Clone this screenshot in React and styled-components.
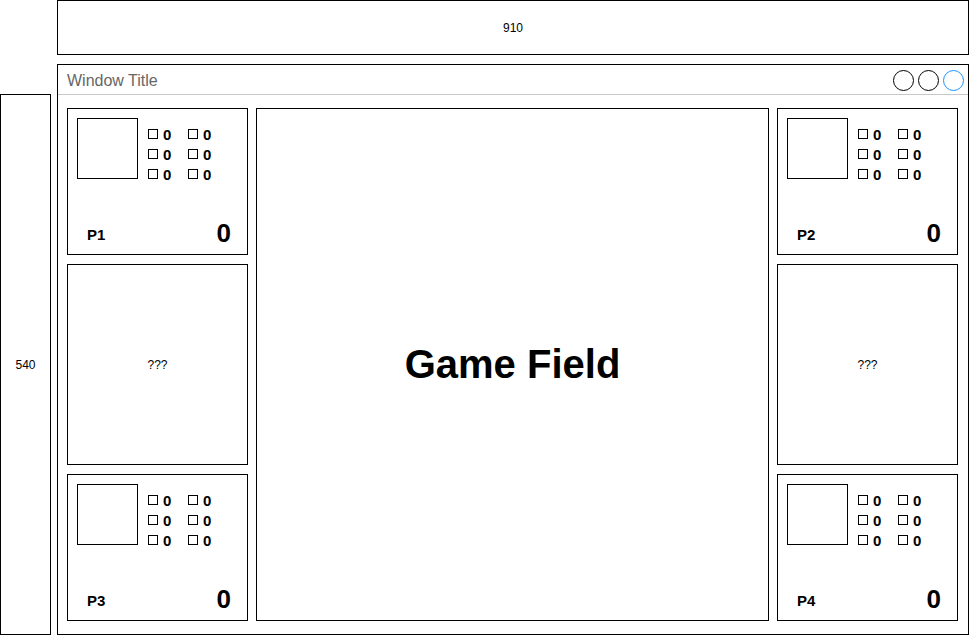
import React from "react";
import styled, { createGlobalStyle } from "styled-components";

const GlobalStyle = createGlobalStyle`
  * { box-sizing: border-box; }
  body {
    margin: 0;
    background: #fff;
    font-family: "Liberation Sans", Arial, sans-serif;
    color: #000;
  }
`;

const Page = styled.div`
  width: 969px;
  height: 635px;
  display: flex;
  flex-direction: column;
`;

const TopRow = styled.div`
  padding-left: 57px;
`;

const Ruler = styled.div`
  border: 1px solid #000;
  display: flex;
  align-items: center;
  justify-content: center;
  font-size: 12px;
`;

const WidthRuler = styled(Ruler)`
  width: 912px;
  height: 55px;
`;

const HeightRuler = styled(Ruler)`
  width: 51px;
  height: 541px;
`;

const MainRow = styled.div`
  margin-top: 9px;
  display: flex;
  align-items: flex-end;
  gap: 6px;
`;

const Window = styled.div`
  width: 912px;
  height: 571px;
  border: 1px solid #000;
  display: flex;
  flex-direction: column;
`;

const TitleBar = styled.div`
  height: 30px;
  border-bottom: 1px solid #c8c8c8;
  display: flex;
  align-items: center;
  justify-content: space-between;
  padding: 1px 4px 0 9px;
`;

const Title = styled.span`
  font-size: 16px;
  color: #666;
  padding-top: 2px;
`;

const Controls = styled.div`
  display: flex;
  gap: 4px;
`;

const Control = styled.span`
  width: 21px;
  height: 21px;
  border-radius: 50%;
  border: 1px solid ${(p) => (p.$active ? "#1e90ff" : "#000")};
`;

const Body = styled.div`
  flex: 1;
  display: grid;
  grid-template-columns: 181px 513px 181px;
  column-gap: 8px;
  padding: 13px 9px 13px 9px;
`;

const Column = styled.div`
  display: flex;
  flex-direction: column;
  gap: 9px;
`;

const Card = styled.div`
  border: 1px solid #000;
  height: 147px;
  padding: 9px 9px 6px;
  display: flex;
  flex-direction: column;
  justify-content: space-between;
`;

const Mystery = styled.div`
  border: 1px solid #000;
  height: 201px;
  display: flex;
  align-items: center;
  justify-content: center;
  font-size: 12px;
`;

const CardTop = styled.div`
  display: flex;
  gap: 10px;
`;

const Avatar = styled.div`
  width: 61px;
  height: 61px;
  border: 1px solid #000;
`;

const Stats = styled.div`
  margin-top: 6px;
  display: grid;
  grid-template-columns: 40px 40px;
  grid-auto-rows: 20px;
`;

const Stat = styled.div`
  display: flex;
  align-items: center;
  gap: 5px;
  font-size: 15px;
  font-weight: bold;
`;

const Box = styled.span`
  width: 10px;
  height: 10px;
  border: 1px solid #000;
`;

const Footer = styled.div`
  height: 30px;
  display: flex;
  align-items: center;
  justify-content: space-between;
  padding: 0 7px 0 10px;
`;

const Label = styled.span`
  font-size: 15px;
  font-weight: bold;
  padding-top: 2px;
`;

const Score = styled.span`
  font-size: 26px;
  font-weight: bold;
`;

const Field = styled.div`
  border: 1px solid #000;
  display: flex;
  align-items: center;
  justify-content: center;
  font-size: 40px;
  font-weight: bold;
`;

const PlayerCard = ({ name }) => (
  <Card>
    <CardTop>
      <Avatar />
      <Stats>
        {Array.from({ length: 6 }).map((_, i) => (
          <Stat key={i}>
            <Box />0
          </Stat>
        ))}
      </Stats>
    </CardTop>
    <Footer>
      <Label>{name}</Label>
      <Score>0</Score>
    </Footer>
  </Card>
);

const App = () => (
  <Page>
    <GlobalStyle />
    <TopRow>
      <WidthRuler>910</WidthRuler>
    </TopRow>
    <MainRow>
      <HeightRuler>540</HeightRuler>
      <Window>
        <TitleBar>
          <Title>Window Title</Title>
          <Controls>
            <Control />
            <Control />
            <Control $active />
          </Controls>
        </TitleBar>
        <Body>
          <Column>
            <PlayerCard name="P1" />
            <Mystery>???</Mystery>
            <PlayerCard name="P3" />
          </Column>
          <Field>Game Field</Field>
          <Column>
            <PlayerCard name="P2" />
            <Mystery>???</Mystery>
            <PlayerCard name="P4" />
          </Column>
        </Body>
      </Window>
    </MainRow>
  </Page>
);

export default App;
